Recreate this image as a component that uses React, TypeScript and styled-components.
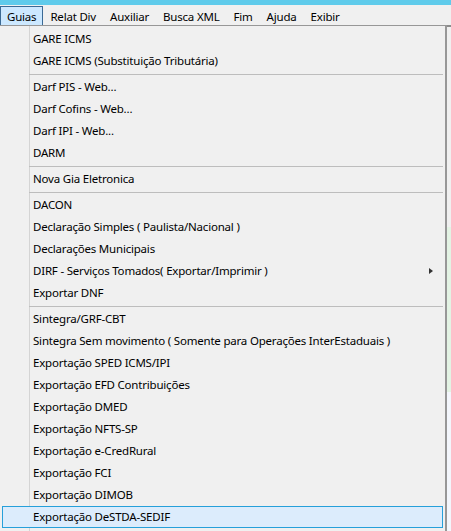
import React from 'react';
import styled, { createGlobalStyle } from 'styled-components';

const GlobalStyle = createGlobalStyle`
  html, body {
    margin: 0;
    padding: 0;
    background: #f0f0f0;
  }
  body {
    font-family: 'Noto Sans', 'Open Sans', sans-serif;
    font-size: 11.5px;
    letter-spacing: -0.2px;
    color: #000;
  }
`;

const Window = styled.div`
  width: 451px;
  height: 531px;
  overflow: hidden;
  background: #f0f0f0;
  display: flex;
  flex-direction: column;
`;

const TitleStrip = styled.div`
  height: 5px;
  background: #5fcbeb;
  flex-shrink: 0;
`;

const MenuBar = styled.div`
  height: 20px;
  display: flex;
  align-items: stretch;
  padding-top: 1px;
  box-sizing: border-box;
  flex-shrink: 0;
`;

const MenuBarItem = styled.div<{ $active?: boolean }>`
  display: flex;
  align-items: center;
  padding: 0 6px;
  height: 18px;
  border: 1px solid ${({ $active }) => ($active ? '#3b6a95' : 'transparent')};
  background: ${({ $active }) => ($active ? '#cce8ff' : 'transparent')};
  white-space: nowrap;
`;

const Body = styled.div`
  flex: 1;
  display: flex;
  min-height: 0;
`;

// the open "Guias" dropdown; its left border sits just off screen
const Dropdown = styled.div`
  margin-left: -1px;
  width: 448px;
  flex-shrink: 0;
  border: 1px solid #979797;
  border-right-width: 2px;
  padding: 2px;
  box-sizing: border-box;
  height: 507px;
  background:
    linear-gradient(#d4d4d4, #d4d4d4) 29px 0 / 1px 100% no-repeat,
    #f0f0f0;
  background-origin: padding-box;
  display: flex;
  flex-direction: column;
`;

const Item = styled.div<{ $hover?: boolean }>`
  height: 22px;
  box-sizing: border-box;
  display: flex;
  align-items: center;
  padding-left: 30px;
  padding-right: 8px;
  border: 1px solid ${({ $hover }) => ($hover ? '#26a0da' : 'transparent')};
  background: ${({ $hover }) => ($hover ? '#dcecfc' : 'transparent')};
  white-space: nowrap;
`;

const ItemLabel = styled.span`
  flex: 1;
  padding-bottom: 1px;
`;

const SubArrow = styled.span`
  width: 0;
  height: 0;
  border-top: 3.5px solid transparent;
  border-bottom: 3.5px solid transparent;
  border-left: 4px solid #333;
  margin-right: 1px;
`;

const Separator = styled.div`
  height: 4px;
  display: flex;
  align-items: center;
  padding-left: 27px;
  &::after {
    content: '';
    flex: 1;
    height: 1px;
    background: #bdbdbd;
  }
`;

const SideStrip = styled.div`
  flex: 1;
  display: flex;
  flex-direction: column;
  border-top: 2px solid #8c8c8c;
`;

const SideBlock = styled.div<{ $h: number; $bg: string }>`
  height: ${({ $h }) => $h}px;
  background: ${({ $bg }) => $bg};
  flex-shrink: 0;
`;

type Entry = { label: string; sub?: boolean; hover?: boolean } | 'sep';

const entries: Entry[] = [
  { label: 'GARE ICMS' },
  { label: 'GARE ICMS (Substituição Tributária)' },
  'sep',
  { label: 'Darf PIS - Web...' },
  { label: 'Darf Cofins - Web...' },
  { label: 'Darf IPI - Web...' },
  { label: 'DARM' },
  'sep',
  { label: 'Nova Gia Eletronica' },
  'sep',
  { label: 'DACON' },
  { label: 'Declaração Simples ( Paulista/Nacional )' },
  { label: 'Declarações Municipais' },
  { label: 'DIRF - Serviços Tomados( Exportar/Imprimir )', sub: true },
  { label: 'Exportar DNF' },
  'sep',
  { label: 'Sintegra/GRF-CBT' },
  { label: 'Sintegra Sem movimento ( Somente para Operações InterEstaduais )' },
  { label: 'Exportação SPED ICMS/IPI' },
  { label: 'Exportação EFD Contribuições' },
  { label: 'Exportação DMED' },
  { label: 'Exportação NFTS-SP' },
  { label: 'Exportação e-CredRural' },
  { label: 'Exportação FCI' },
  { label: 'Exportação DIMOB' },
  { label: 'Exportação DeSTDA-SEDIF', hover: true },
];

const menus = ['Guias', 'Relat Div', 'Auxiliar', 'Busca XML', 'Fim', 'Ajuda', 'Exibir'];

export default function App() {
  return (
    <>
      <GlobalStyle />
      <Window>
        <TitleStrip />
        <MenuBar>
          {menus.map((m, i) => (
            <MenuBarItem key={m} $active={i === 0}>
              {m}
            </MenuBarItem>
          ))}
        </MenuBar>
        <Body>
          <Dropdown>
            {entries.map((e, i) =>
              e === 'sep' ? (
                <Separator key={i} />
              ) : (
                <Item key={i} $hover={e.hover}>
                  <ItemLabel>{e.label}</ItemLabel>
                  {e.sub && <SubArrow />}
                </Item>
              )
            )}
          </Dropdown>
          <SideStrip>
            <SideBlock $h={200} $bg="#f0f0f0" />
            <SideBlock $h={165} $bg="#e3f3e4" />
            <SideBlock $h={150} $bg="#f3f6fc" />
          </SideStrip>
        </Body>
      </Window>
    </>
  );
}
